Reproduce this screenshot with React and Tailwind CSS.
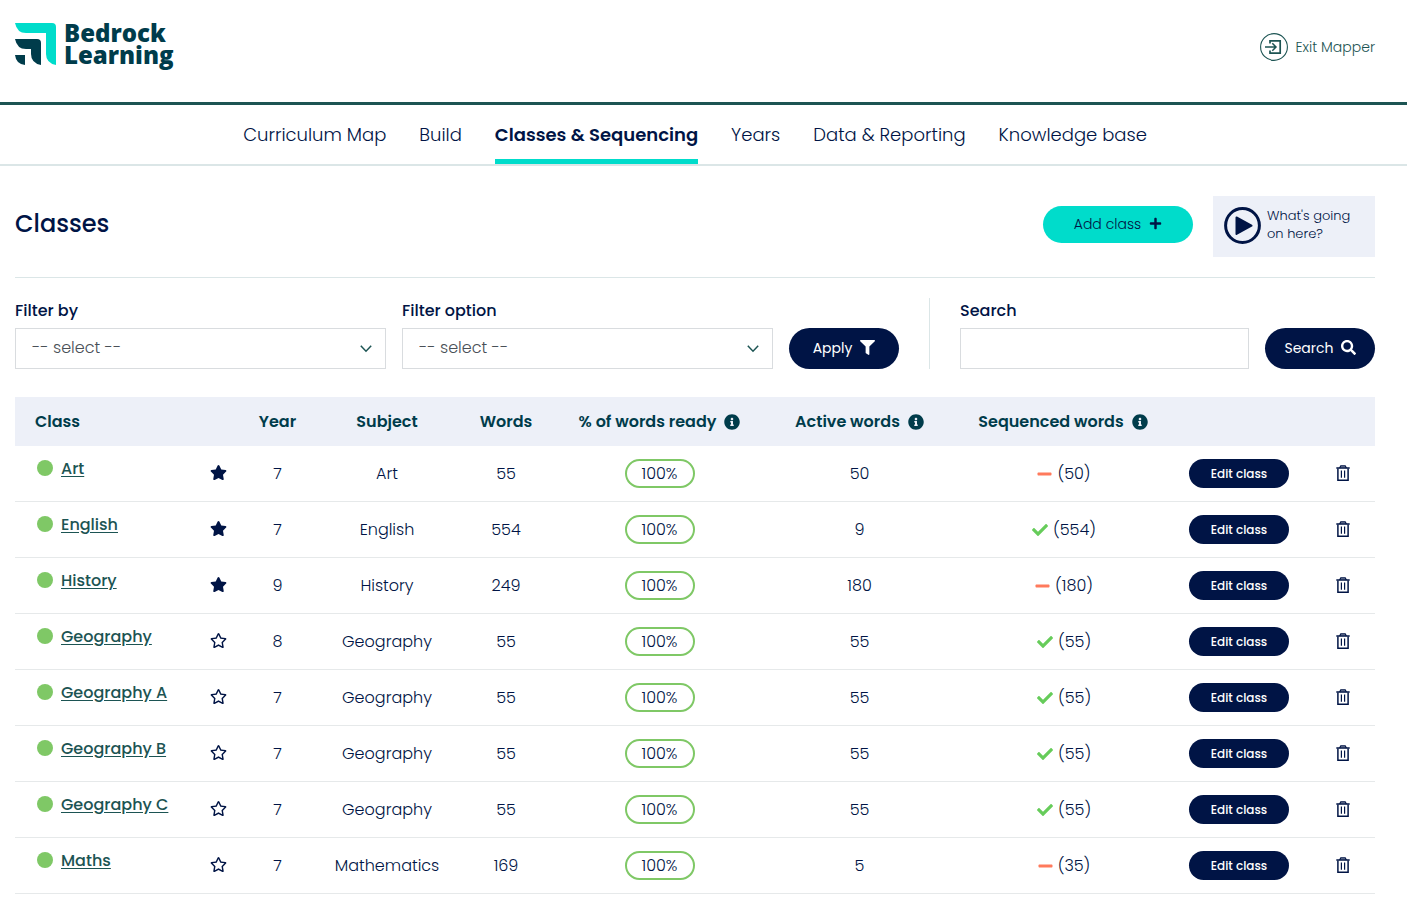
import { useState } from 'react'
import { FaCheck, FaFilter, FaInfoCircle, FaMinus, FaPlus, FaRegStar, FaSearch, FaStar } from 'react-icons/fa'

const NAV = ['Curriculum Map', 'Build', 'Classes & Sequencing', 'Years', 'Data & Reporting', 'Knowledge base']

const CLASSES = [
  { name: 'Art', starred: true, year: 7, subject: 'Art', words: 55, active: 50, sequenced: 50, complete: false },
  { name: 'English', starred: true, year: 7, subject: 'English', words: 554, active: 9, sequenced: 554, complete: true },
  { name: 'History', starred: true, year: 9, subject: 'History', words: 249, active: 180, sequenced: 180, complete: false },
  { name: 'Geography', starred: false, year: 8, subject: 'Geography', words: 55, active: 55, sequenced: 55, complete: true },
  { name: 'Geography A', starred: false, year: 7, subject: 'Geography', words: 55, active: 55, sequenced: 55, complete: true },
  { name: 'Geography B', starred: false, year: 7, subject: 'Geography', words: 55, active: 55, sequenced: 55, complete: true },
  { name: 'Geography C', starred: false, year: 7, subject: 'Geography', words: 55, active: 55, sequenced: 55, complete: true },
  { name: 'Maths', starred: false, year: 7, subject: 'Mathematics', words: 169, active: 5, sequenced: 35, complete: false },
]

function Logo() {
  return (
    <a href="#" className="flex items-start gap-[7px] text-[#003c4b]">
      <svg width="42" height="42" viewBox="0 0 42 42" className="mt-px">
        <path d="M0 0H37Q41 0 41 4V42Q31 40 31 31V10H11Q2 10 0 0Z" fill="#00dccb" />
        <path d="M0 16H22Q26 16 26 20V42Q16 40 16 31V26H11Q2 26 0 16Z" fill="#003c4b" />
        <path d="M0 32H10V42Q1 41 0 32Z" fill="#003c4b" />
      </svg>
      <span className="font-['Open_Sans'] text-2xl leading-[22px] font-extrabold">
        Bedrock
        <br />
        Learning
      </span>
    </a>
  )
}

function ExitIcon() {
  return (
    <svg width="28" height="28" viewBox="0 0 28 28" fill="none" stroke="#1c5453">
      <circle cx="14" cy="14" r="13.4" strokeWidth="1.1" />
      <path d="M10 10.5V7.8H20.2V20.2H10V17.5" strokeWidth="1.7" />
      <path d="M5 14H15.5M12.3 10.3L16 14L12.3 17.7" strokeWidth="1.5" />
    </svg>
  )
}

function PlayIcon() {
  return (
    <svg width="37" height="37" viewBox="0 0 37 37">
      <circle cx="18.5" cy="18.5" r="16.9" fill="none" stroke="#001445" strokeWidth="3" />
      <path d="M12.5 10.5L27.5 18.7L12.5 27Z" fill="#001445" stroke="#001445" strokeWidth="2" strokeLinejoin="round" />
    </svg>
  )
}

function TrashIcon() {
  return (
    <svg width="14" height="16" viewBox="0 0 14 16" fill="none" stroke="#001445">
      <path d="M0.3 3H13.7" strokeWidth="1.5" />
      <path d="M3.6 3L4.8 0.8H9.2L10.4 3" fill="#001445" fillOpacity="0.35" strokeWidth="1.2" />
      <path d="M1.9 3.5V15.2H12.1V3.5" strokeWidth="1.5" />
      <path d="M5.4 5.5V12.8M8.6 5.5V12.8" strokeWidth="1.2" />
    </svg>
  )
}

function SelectField({ id, label }) {
  return (
    <div className="flex-1">
      <label htmlFor={id} className="block h-[30px] text-base leading-[26px] font-medium">{label}</label>
      <div className="relative">
        <select
          id={id}
          className="block w-full h-[41px] appearance-none border border-[#d9dcdf] bg-white px-4 pb-0.5 text-base font-light text-[#495057]"
        >
          <option>-- select --</option>
        </select>
        <svg width="12" height="8" viewBox="0 0 12 8" className="pointer-events-none absolute right-[14px] top-[17px]" fill="none" stroke="#1c5453" strokeWidth="1.5">
          <path d="M0.8 0.8L6 6.2L11.2 0.8" />
        </svg>
      </div>
    </div>
  )
}

function InfoHeader({ children }) {
  return (
    <span className="flex items-center justify-center gap-2 whitespace-nowrap">
      {children}
      <FaInfoCircle className="size-4" />
    </span>
  )
}

function ClassRow({ row }) {
  const [starred, setStarred] = useState(row.starred)

  return (
    <tr className="h-14 [&>td]:border-b [&>td]:border-[#e6e9ea]">
      <td className="pl-[22px] pt-[11px] text-left align-top">
        <span className="flex items-center gap-2">
          <span className="mb-0.5 size-4 rounded-full bg-[#7fc866]" />
          <a href="#" className="font-medium text-[#1c5453] underline underline-offset-2">{row.name}</a>
        </span>
      </td>
      <td className="pb-0.5">
        <button type="button" aria-label="Favourite" onClick={() => setStarred(!starred)} className="block mx-auto">
          {starred ? <FaStar className="size-[17px]" /> : <FaRegStar className="size-[17px]" />}
        </button>
      </td>
      <td>{row.year}</td>
      <td>{row.subject}</td>
      <td>{row.words}</td>
      <td>
        <span className="mx-auto flex h-[29px] w-[70px] items-center justify-center rounded-full border-2 border-[#7fc866]">100%</span>
      </td>
      <td>{row.active}</td>
      <td>
        <span className="flex items-center justify-center gap-[5px] pl-0.5">
          {row.complete ? <FaCheck className="size-4 text-[#66cc5a]" /> : <FaMinus className="h-4 w-[15px] text-[#ff7a5c]" />}
          ({row.sequenced})
        </span>
      </td>
      <td>
        <button type="button" className="mx-auto block h-[29px] w-[100px] rounded-full bg-[#001445] text-xs font-medium text-white">
          Edit class
        </button>
      </td>
      <td className="pb-0.5">
        <button type="button" aria-label="Delete class" className="mx-auto block">
          <TrashIcon />
        </button>
      </td>
    </tr>
  )
}

export default function App() {
  return (
    <div className="min-h-screen bg-white font-['Poppins','Inter',sans-serif] text-[#001445]">
      {/* Header */}
      <header className="flex h-[105px] items-start justify-between border-b-3 border-[#1c5453] pl-[15px] pr-8 pt-[22px]">
        <Logo />
        <a href="#" className="mt-[11px] flex items-center gap-2 text-sm font-light text-[#1c5453]">
          <ExitIcon />
          Exit Mapper
        </a>
      </header>

      <nav className="flex h-[61px] justify-center gap-[33px] border-b-2 border-[#dbe6e7] pl-[15px] pr-8 text-lg leading-[60px]">
        {NAV.map((item) => (
          <a
            key={item}
            href="#"
            className={item === 'Classes & Sequencing' ? 'h-[59px] border-b-5 border-[#00dccb] font-semibold' : 'font-light'}
          >
            {item}
          </a>
        ))}
      </nav>

      <main className="pl-[15px] pr-8 pt-[30px]">
        {/* Title */}
        <div className="flex items-center gap-5 border-b border-[#dbe6e7] pb-5">
          <div className="flex flex-1 items-center justify-between pb-1">
            <h1 className="pb-0.5 text-2xl font-medium">Classes</h1>
            <button type="button" className="flex h-[37px] w-[150px] items-center justify-center gap-2 rounded-full bg-[#00dccb] pb-0.5 text-sm font-light">
              Add class
              <FaPlus className="size-[13px]" />
            </button>
          </div>
          <button type="button" className="flex h-[61px] w-[162px] items-center gap-1.5 bg-[#edf0f8] pb-[3px] pl-[11px] text-left text-[13px] leading-[18px] font-light">
            <PlayIcon />
            <span>
              What's going
              <br />
              on here?
            </span>
          </button>
        </div>

        {/* Filters */}
        <div className="flex pt-5">
          <form className="flex w-[65%] items-end gap-4">
            <SelectField id="filter-by" label="Filter by" />
            <SelectField id="filter-option" label="Filter option" />
            <button type="button" className="flex h-[41px] w-[110px] items-center justify-center gap-2 rounded-full bg-[#001445] pb-0.5 text-sm text-white">
              Apply
              <FaFilter className="size-[15px]" />
            </button>
          </form>
          <form className="ml-[30px] flex flex-1 items-end gap-4 border-l border-[#dbe6e7] pl-[30px]">
            <div className="flex-1">
              <label htmlFor="search" className="block h-[30px] text-base leading-[26px] font-medium">Search</label>
              <input id="search" type="text" className="block h-[41px] w-full border border-[#d9dcdf] px-4" />
            </div>
            <button type="button" className="flex h-[41px] w-[110px] items-center justify-center gap-[7px] rounded-full bg-[#001445] pb-0.5 text-sm text-white">
              Search
              <FaSearch className="size-[15px]" />
            </button>
          </form>
        </div>

        {/* Classes */}
        <table className="mt-7 w-full table-fixed border-separate border-spacing-0 text-center text-base font-light">
          <thead>
            <tr className="h-[49px] bg-[#edf0f8] text-[#003c4b]">
              <th className="w-[187px] pl-5 text-left font-semibold">Class</th>
              <th className="w-8"></th>
              <th className="w-[87px] font-semibold">Year</th>
              <th className="w-[132px] font-semibold">Subject</th>
              <th className="w-[106px] font-semibold">Words</th>
              <th className="w-[201px] font-semibold"><InfoHeader>% of words ready</InfoHeader></th>
              <th className="w-[199px] font-semibold"><InfoHeader>Active words</InfoHeader></th>
              <th className="w-[208px] font-semibold"><InfoHeader>Sequenced words</InfoHeader></th>
              <th className="w-36"></th>
              <th className="w-16"></th>
            </tr>
          </thead>
          <tbody>
            {CLASSES.map((row) => (
              <ClassRow key={row.name} row={row} />
            ))}
          </tbody>
        </table>
      </main>
    </div>
  )
}
